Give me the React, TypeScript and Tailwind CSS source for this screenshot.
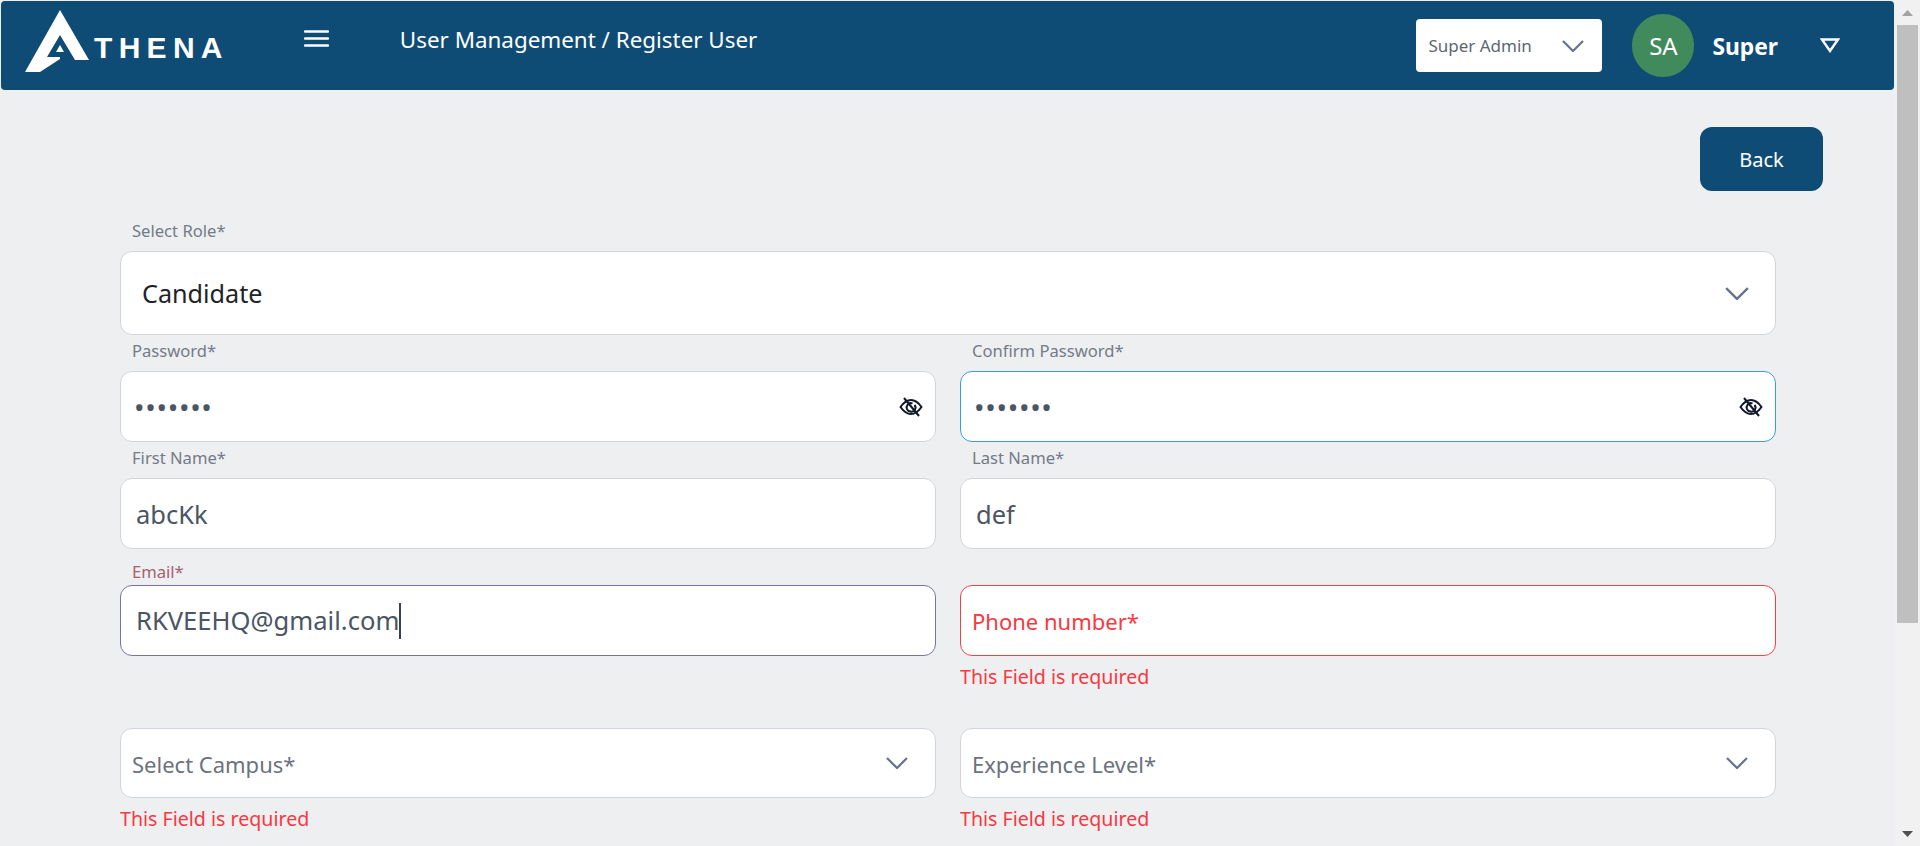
import { ReactNode } from "react";

function Chevron({ className }: { className: string }) {
  return (
    <svg viewBox="0 0 22 12" fill="none" stroke="currentColor" strokeWidth="2.2" className={className}>
      <path d="M1 1l10 10L21 1" />
    </svg>
  );
}

function EyeOff() {
  return (
    <svg viewBox="0 0 24 20" fill="none" stroke="#111827" strokeWidth="2" className="w-[24px] h-[20px]">
      <path d="M1.5 10C5 5 8.500 3 12 3s7 2 10.500 7c-3.500 5-7 7-10.500 7S5 15 1.500 10z" />
      <path d="M15.500 8a4 4 0 0 1-4 6.500 4 4 0 0 1-3-6.500 4 4 0 0 1 5-1.500" />
      <path d="M5 1l15 18" />
    </svg>
  );
}

function Logo() {
  return (
    <svg viewBox="0 0 70 64" className="w-[70px] h-[64px] shrink-0">
      <path fill="#fff" fillRule="evenodd" d="M35 0L64 50H50L35 25L22 47H35V49L15 62H0ZM35 35L39 42H31Z" />
    </svg>
  );
}

function Label({ children, tone = "text-[#737b86]", place = "mb-[8px]" }: { children: ReactNode; tone?: string; place?: string }) {
  return <div className={`h-[24px] pl-[12px] text-[16.600px] leading-[24px] ${place} ${tone}`}>{children}</div>;
}

function Box({ children, border = "border-[#d1d5db]", h = "h-[71px]" }: { children: ReactNode; border?: string; h?: string }) {
  return (
    <div className={`${h} flex items-center bg-white border rounded-[12px] ${border}`}>{children}</div>
  );
}

function Error() {
  return <div className="mt-[8px] h-[26px] text-[19.600px] leading-[26px] text-[#f8383f]">This Field is required</div>;
}

function SelectBox({ text }: { text: string }) {
  return (
    <div>
      <Box h="h-[70px]">
        <span className="pl-[11px] pt-[2px] text-[22px] text-[#6b7280]">{text}</span>
        <Chevron className="ml-auto mr-[27px] w-[22px] h-[12px] text-[#64748b]" />
      </Box>
      <Error />
    </div>
  );
}

function PasswordField({ label, border }: { label: string; border?: string }) {
  return (
    <div>
      <Label>{label}</Label>
      <Box border={border}>
        <span className="pl-[13px] pt-[1px] text-[28px] leading-none tracking-[0.700px] text-[#4b5563]">•••••••</span>
        <span className="ml-auto mr-[12px] flex"><EyeOff /></span>
      </Box>
    </div>
  );
}

function TextField({ label, value }: { label: string; value: string }) {
  return (
    <div>
      <Label>{label}</Label>
      <Box>
        <span className="pl-[15px] pt-[1px] text-[25.500px] text-[#4b5563]">{value}</span>
      </Box>
    </div>
  );
}

export default function App() {
  return (
    <div className="h-[846px] flex overflow-hidden bg-[#eeeff1] font-['Noto_Sans',sans-serif]">
      <div className="flex-1 min-w-0">
        <header className="mt-[1px] ml-[1px] mr-[1px] h-[89px] flex items-center bg-[#0f4c75] rounded-[4px] text-white">
          <div className="ml-[24px] flex items-end pb-[8px]">
            <Logo />
            <span className="ml-[-1px] mb-[10px] font-['Liberation_Sans',sans-serif] text-[30px] leading-[32px] font-bold tracking-[6.300px]">THENA</span>
          </div>
          <svg viewBox="0 0 25 17" stroke="#fff" strokeWidth="2.400" strokeLinecap="round" className="ml-[75px] w-[25px] h-[17px] mb-[14px]">
            <path d="M1 1.500h23M1 8.500h23M1 15.500h23" />
          </svg>
          <div className="ml-[71px] mb-[12px] text-[22.400px]">User Management / Register User</div>
          <div className="ml-auto w-[186px] h-[53px] flex items-center bg-white rounded-[4px]">
            <span className="pl-[12px] text-[17px] text-[#5f6672]">Super Admin</span>
            <Chevron className="ml-auto mr-[18px] w-[22px] h-[12px] text-[#64748b]" />
          </div>
          <div className="ml-[30px] w-[62px] h-[63px] flex items-center justify-center rounded-full bg-[#418a5c] text-[24px]">SA</div>
          <span className="ml-[18px] pt-[3px] text-[22.800px] font-bold">Super</span>
          <svg viewBox="0 0 20 15" fill="none" stroke="#fff" strokeWidth="2.400" className="ml-[42px] mr-[54px] w-[20px] h-[15px]">
            <path d="M2 1.500h16L10 13z" />
          </svg>
        </header>
        <div className="mt-[37px] pr-[72px] flex justify-end">
          <button className="w-[123px] h-[64px] pt-[1px] bg-[#0f4c75] rounded-[12px] text-white text-[20px]">Back</button>
        </div>
        <div className="mt-[28px] mx-[120px] w-[1656px]">
          <Label>Select Role*</Label>
          <Box h="h-[84px]">
            <span className="pl-[21px] pt-[1px] text-[25.200px] text-[#1f2328]">Candidate</span>
            <Chevron className="ml-auto mr-[26px] w-[24px] h-[13px] text-[#64748b]" />
          </Box>
          <div className="mt-[4px] grid grid-cols-2 gap-x-[24px] gap-y-[4px]">
            <PasswordField label="Password*" />
            <PasswordField label="Confirm Password*" border="border-[#3b9ae1]" />
            <TextField label="First Name*" value="abcKk" />
            <TextField label="Last Name*" value="def" />
            <div>
              <Label tone="text-[#a5606f]" place="mt-[7px] mb-[1px]">Email*</Label>
              <Box border="border-[#7a70a8]">
                <span className="pl-[15px] pt-[1px] text-[25.600px] text-[#4b5563]">RKVEEHQ@gmail.com</span>
                <span className="w-[2px] h-[36px] bg-[#374151]" />
              </Box>
            </div>
            <div className="pt-[32px]">
              <Box border="border-[#f04444]">
                <span className="pl-[11px] pt-[2px] text-[22px] text-[#f8383f]">Phone number*</span>
              </Box>
              <Error />
            </div>
          </div>
          <div className="mt-[38px] grid grid-cols-2 gap-x-[24px]">
            <SelectBox text="Select Campus*" />
            <SelectBox text="Experience Level*" />
          </div>
        </div>
      </div>
      {/* scrollbar */}
      <aside className="w-[25px] shrink-0 flex flex-col items-start pl-[2px] bg-[#f1f1f1]">
        <div className="w-[21px] h-[25px] flex items-center justify-center text-[#a3a3a3]">
          <svg viewBox="0 0 11 6" className="w-[11px] h-[6px]"><path fill="currentColor" d="M5.500 0L11 6H0z" /></svg>
        </div>
        <div className="w-[21px] h-[598px] bg-[#bfbfbf]" />
        <div className="mt-auto w-[21px] h-[25px] flex items-center justify-center text-[#505050]">
          <svg viewBox="0 0 11 6" className="w-[11px] h-[6px]"><path fill="currentColor" d="M0 0h11L5.500 6z" /></svg>
        </div>
      </aside>
    </div>
  );
}
